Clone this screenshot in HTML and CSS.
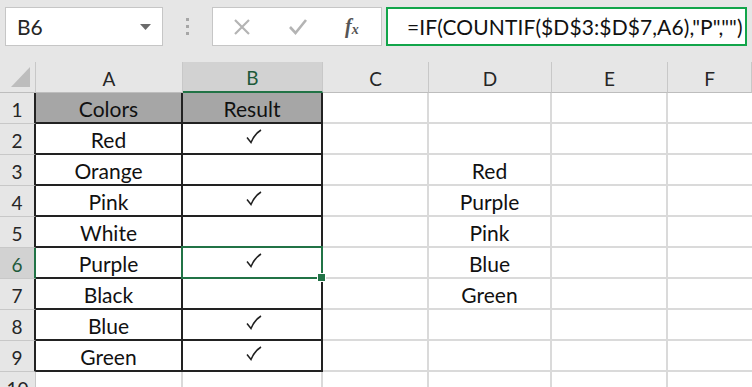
FILE: index.html
```html
<!DOCTYPE html>
<html lang="en">
<head>
  <meta charset="UTF-8">
  <title>Sheet</title>
  <link rel="stylesheet" href="styles.css">
</head>
<body>

  <!-- Formula bar -->
  <div class="topbar">
    <div class="namebox">
      <span>B6</span>
      <svg class="caret" width="11" height="6" viewBox="0 0 11 6"><path d="M0 0 H11 L5.5 6 Z" fill="#6b6b6b"/></svg>
    </div>
    <div class="grip"><i></i><i></i><i></i></div>
    <div class="fxbox">
      <svg width="18" height="18" viewBox="0 0 18 18"><path d="M2 2 L16 16 M16 2 L2 16" stroke="#b4b4b4" stroke-width="2.2" fill="none"/></svg>
      <svg width="20" height="18" viewBox="0 0 20 18"><path d="M2 9 L7.5 15 L18 2" stroke="#b4b4b4" stroke-width="2.6" fill="none"/></svg>
      <span class="fx">f<sub>x</sub></span>
    </div>
    <div class="formula">=IF(COUNTIF($D$3:$D$7,A6),"P","")</div>
  </div>

  <!-- Grid -->
  <div class="sheet">
    <div class="corner"><svg width="19" height="20" viewBox="0 0 19 20"><path d="M19 0 V20 H0 Z" fill="#bdbdbd"/></svg></div>
    <div class="ch">A</div>
    <div class="ch active">B</div>
    <div class="ch">C</div>
    <div class="ch">D</div>
    <div class="ch">E</div>
    <div class="ch last">F</div>

    <div class="rh tb">1</div>
    <div class="c t head">Colors</div>
    <div class="c t head">Result</div>
    <div class="c"></div><div class="c"></div><div class="c"></div><div class="c last"></div>

    <div class="rh tb">2</div>
    <div class="c t">Red</div>
    <div class="c t"><svg class="tick" width="16" height="15" viewBox="0 0 16 15"><path d="M1 8.5 L5 13.5 Q8.5 5 15 1" stroke="#1f1f1f" stroke-width="1.5" fill="none"/></svg></div>
    <div class="c"></div><div class="c"></div><div class="c"></div><div class="c last"></div>

    <div class="rh tb">3</div>
    <div class="c t">Orange</div>
    <div class="c t"></div>
    <div class="c"></div><div class="c">Red</div><div class="c"></div><div class="c last"></div>

    <div class="rh tb">4</div>
    <div class="c t">Pink</div>
    <div class="c t"><svg class="tick" width="16" height="15" viewBox="0 0 16 15"><path d="M1 8.5 L5 13.5 Q8.5 5 15 1" stroke="#1f1f1f" stroke-width="1.5" fill="none"/></svg></div>
    <div class="c"></div><div class="c">Purple</div><div class="c"></div><div class="c last"></div>

    <div class="rh tb">5</div>
    <div class="c t">White</div>
    <div class="c t"></div>
    <div class="c"></div><div class="c">Pink</div><div class="c"></div><div class="c last"></div>

    <div class="rh tb active">6</div>
    <div class="c t">Purple</div>
    <div class="c t sel"><svg class="tick" width="16" height="15" viewBox="0 0 16 15"><path d="M1 8.5 L5 13.5 Q8.5 5 15 1" stroke="#1f1f1f" stroke-width="1.5" fill="none"/></svg></div>
    <div class="c"></div><div class="c">Blue</div><div class="c"></div><div class="c last"></div>

    <div class="rh tb">7</div>
    <div class="c t">Black</div>
    <div class="c t"></div>
    <div class="c"></div><div class="c">Green</div><div class="c"></div><div class="c last"></div>

    <div class="rh tb">8</div>
    <div class="c t">Blue</div>
    <div class="c t"><svg class="tick" width="16" height="15" viewBox="0 0 16 15"><path d="M1 8.5 L5 13.5 Q8.5 5 15 1" stroke="#1f1f1f" stroke-width="1.5" fill="none"/></svg></div>
    <div class="c"></div><div class="c"></div><div class="c"></div><div class="c last"></div>

    <div class="rh tb">9</div>
    <div class="c t">Green</div>
    <div class="c t"><svg class="tick" width="16" height="15" viewBox="0 0 16 15"><path d="M1 8.5 L5 13.5 Q8.5 5 15 1" stroke="#1f1f1f" stroke-width="1.5" fill="none"/></svg></div>
    <div class="c"></div><div class="c"></div><div class="c"></div><div class="c last"></div>

    <div class="rh">10</div>
    <div class="c"></div><div class="c"></div>
    <div class="c"></div><div class="c"></div><div class="c"></div><div class="c last"></div>
  </div>

</body>
</html>
```

FILE: styles.css
```css
/* Basic styling */
body {
  margin: 0;
  font-family: Lato, "Open Sans", sans-serif;
  background-color: #ffffff;
  overflow: hidden;
}

/* Formula bar */
.topbar {
  display: flex;
  align-items: flex-start;
  height: 62px;
  padding-top: 7px;
  box-sizing: border-box;
  background-color: #e6e6e6;
}

.namebox {
  display: flex;
  align-items: center;
  justify-content: space-between;
  margin-left: 5px;
  width: 158px;
  height: 39px;
  padding: 0 11px 0 11px;
  box-sizing: border-box;
  background-color: #ffffff;
  border: 1px solid #c6c6c6;
  font-size: 21px;
  color: #262626;
}

.grip {
  display: flex;
  flex-direction: column;
  align-items: center;
  gap: 4px;
  width: 49px;
  padding-top: 11px;
}

.grip i {
  width: 3px;
  height: 3px;
  background-color: #a6a6a6;
}

.fxbox {
  display: flex;
  align-items: center;
  gap: 37px;
  width: 170px;
  height: 39px;
  padding-left: 20px;
  box-sizing: border-box;
  background-color: #ffffff;
  border: 1px solid #c6c6c6;
}

.fx {
  font-family: "Liberation Serif", serif;
  font-style: italic;
  font-weight: bold;
  font-size: 20px;
  color: #555555;
}

.fx sub {
  font-size: 14px;
  vertical-align: -1px;
}

.formula {
  margin-left: 4px;
  width: 361px;
  height: 39px;
  padding-left: 19px;
  box-sizing: border-box;
  border: 2px solid #12a54a;
  background-color: #ffffff;
  font-size: 21px;
  letter-spacing: 0.1px;
  line-height: 36px;
  color: #111111;
  white-space: nowrap;
}

/* Grid */
.sheet {
  display: grid;
  grid-template-columns: 36px 147px 140px 106px 123px 116px 84px;
  grid-auto-rows: 31px;
}

.corner {
  display: flex;
  align-items: flex-end;
  justify-content: flex-end;
  padding: 0 5px 5px 0;
  background-color: #e6e6e6;
  border-right: 1px solid #c8c8c8;
  border-bottom: 1px solid #bdbdbd;
}

.ch {
  display: flex;
  align-items: center;
  justify-content: center;
  padding-top: 2px;
  background-color: #e6e6e6;
  border-right: 1px solid #c8c8c8;
  border-bottom: 1px solid #bdbdbd;
  font-size: 19px;
  color: #262626;
}

.ch.active {
  background-color: #d2d2d2;
  border-bottom: 2px solid #217346;
  color: #1e5a3a;
}

.rh {
  display: flex;
  align-items: center;
  justify-content: center;
  padding-top: 2px;
  background-color: #e6e6e6;
  border-right: 1px solid #c8c8c8;
  border-bottom: 1px solid #c8c8c8;
  font-size: 19px;
  color: #262626;
}

.rh.tb {
  border-right: 2px solid #222222;
}

.rh.active {
  background-color: #d2d2d2;
  border-right: 2px solid #217346;
  color: #1e5a3a;
}

.c {
  display: flex;
  align-items: center;
  justify-content: center;
  padding-top: 2px;
  border-right: 2px solid #dadada;
  border-bottom: 2px solid #dadada;
  font-size: 21px;
  color: #111111;
}

.c.last {
  border-right: none;
}

/* Table A1:B9 */
.c.t {
  border-right-color: #222222;
  border-bottom-color: #222222;
}

.c.head {
  background-color: #a6a6a6;
}

.tick {
  margin: 0 0 6px 4px;
}

/* Selected cell B6 */
.c.sel {
  position: relative;
}

.c.sel::after {
  content: "";
  position: absolute;
  top: -2px;
  left: -2px;
  right: -2px;
  bottom: -2px;
  border: 2px solid #217346;
}

.c.sel::before {
  content: "";
  position: absolute;
  right: -5px;
  bottom: -5px;
  width: 7px;
  height: 7px;
  background-color: #217346;
  border: 1px solid #ffffff;
  z-index: 1;
}
```
